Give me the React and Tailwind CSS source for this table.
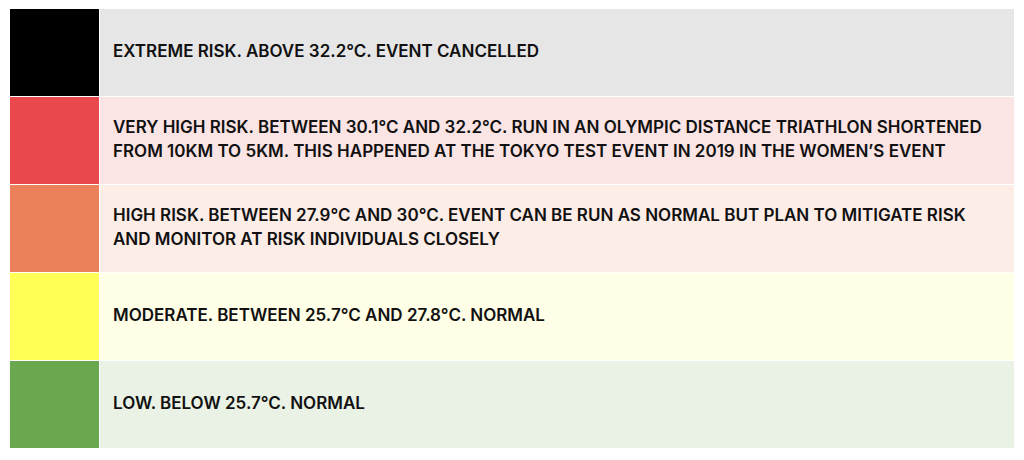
export default function App() {
  const rows = [
    { c: "bg-[#000000]", b: "bg-[#e6e6e6]", t: "EXTREME RISK. ABOVE 32.2°C. EVENT CANCELLED" },
    { c: "bg-[#e9494c]", b: "bg-[#fbe4e4]", t: "VERY HIGH RISK. BETWEEN 30.1°C AND 32.2°C. RUN IN AN OLYMPIC DISTANCE TRIATHLON SHORTENED FROM 10KM TO 5KM. THIS HAPPENED AT THE TOKYO TEST EVENT IN 2019 IN THE WOMEN’S EVENT" },
    { c: "bg-[#eb805a]", b: "bg-[#fcede7]", t: "HIGH RISK. BETWEEN 27.9°C AND 30°C. EVENT CAN BE RUN AS NORMAL BUT PLAN TO MITIGATE RISK AND MONITOR AT RISK INDIVIDUALS CLOSELY" },
    { c: "bg-[#ffff55]", b: "bg-[#fffee6]", t: "MODERATE. BETWEEN 25.7°C AND 27.8°C. NORMAL" },
    { c: "bg-[#6aa84f]", b: "bg-[#eaf2e5]", t: "LOW. BELOW 25.7°C. NORMAL" },
  ];
  return (
    <div className="w-[1024px] h-[460px] bg-white pt-[9px] pl-[10px]" style={{ fontFamily: "Inter, 'Liberation Sans', sans-serif" }}>
      <div className="w-[1004px] flex flex-col gap-px">
        {rows.map((r, i) => (
          <div key={i} className="flex h-[87px] gap-px">
            <div className={`w-[89px] shrink-0 ${r.c}`} />
            <div className={`flex-1 flex items-center pl-[13px] pr-[12px] pb-[3px] ${r.b}`}>
              <p className="text-[17px] leading-[24px] font-semibold text-[#111]">{r.t}</p>
            </div>
          </div>
        ))}
      </div>
    </div>
  );
}
